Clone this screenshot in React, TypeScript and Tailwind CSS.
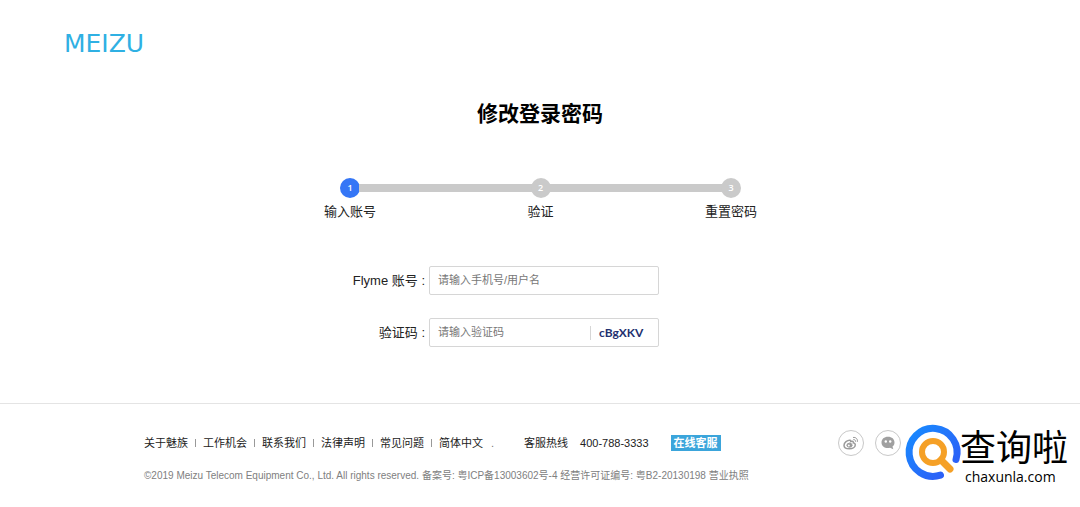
import { clsx } from "clsx";
import { Fragment, useState } from "react";

const steps = ["输入账号", "验证", "重置密码"];

const footerLinks = [
	"关于魅族",
	"工作机会",
	"联系我们",
	"法律声明",
	"常见问题",
	"简体中文",
];

const StepBar = ({ current }: { current: number }) => (
	<div className="flex flex-col items-center pl-px">
		<div className="flex w-[401px] items-center">
			{steps.map((step, index) => (
				<Fragment key={step}>
					{index > 0 && <div className="-mx-px h-2 flex-1 bg-[#cacaca]" />}
					<span
						className={clsx(
							"flex size-5 items-center justify-center rounded-full font-['Open_Sans',sans-serif] text-[9px] font-semibold text-white",
							index === current ? "bg-[#3576f6]" : "bg-[#cacaca]"
						)}
					>
						{index + 1}
					</span>
				</Fragment>
			))}
		</div>
		<ol className="mt-1 flex w-[433px] justify-between text-[13px] leading-5">
			{steps.map((step) => (
				<li key={step} className="w-[52px] text-center">
					{step}
				</li>
			))}
		</ol>
	</div>
);

const WeiboIcon = () => (
	<svg viewBox="0 0 16 16" className="size-4" fill="none" stroke="#9a9a9a">
		<path
			d="M7 5.2C4.300 5 1 7.600 1 10.200c0 2.200 2.300 3.600 5.300 3.600 3.400 0 6-1.800 6-4 0-1.200-.9-1.800-2-2 .5-1.300-.6-2-2.600-1.200.2-.9 0-1.300-.7-1.400z"
			strokeWidth="1.500"
		/>
		<ellipse cx="6.500" cy="10.200" rx="2.600" ry="2" fill="#9a9a9a" />
		<circle cx="5.800" cy="10.500" r="1" fill="#fff" stroke="none" />
		<path d="M10.300 4.600c1.400-.3 2.500.8 2.200 2.100M10 2.500c2.900-.6 5 1.700 4.300 4.400" />
	</svg>
);

const ChatIcon = () => (
	<svg viewBox="0 0 16 16" className="size-4">
		<path
			d="M8 1.800c3.900 0 6.500 2.400 6.500 5.600 0 1.800-.7 3.200-2 4.200l.8 2.600-3.300-1.400c-.6.2-1.300.2-2 .2-3.900 0-6.500-2.400-6.500-5.600s2.600-5.600 6.500-5.600z"
			fill="#a0a0a0"
		/>
		<circle cx="5.800" cy="6.500" r="1.200" fill="#fff" />
		<circle cx="10.200" cy="6.500" r="1.200" fill="#fff" />
	</svg>
);

const SearchBadge = () => (
	<div className="absolute right-3 bottom-5 flex items-start">
		<svg
			viewBox="0 0 54 56"
			className="h-14 w-[54px] overflow-visible"
			fill="none"
		>
			<defs>
				<linearGradient id="ring" x1="0" y1="0" x2="1" y2="1">
					<stop offset="0" stopColor="#188cff" />
					<stop offset="1" stopColor="#3058f5" />
				</linearGradient>
			</defs>
			<circle cx="27" cy="28" r="27" fill="#fff" />
			<path
				d="M34.500 51.200A24 24 0 1 1 50 35.500"
				stroke="url(#ring)"
				strokeWidth="7"
				strokeLinecap="round"
			/>
			<circle cx="27" cy="28" r="11" stroke="#f5a026" strokeWidth="6" />
			<path
				d="M35 36l9 9"
				stroke="#f5a026"
				strokeWidth="7"
				strokeLinecap="round"
			/>
		</svg>
		<div className="flex flex-col pt-1 text-black">
			<span className="text-[36px] leading-[42px]">查询啦</span>
			<span className="pl-[5px] font-['Open_Sans',sans-serif] text-[14px] leading-[14px] font-medium">
				chaxunla.com
			</span>
		</div>
	</div>
);

const App = () => {
	const [account, setAccount] = useState("");
	const [code, setCode] = useState("");

	return (
		<div className="relative bg-white pb-[20px] font-['Liberation_Sans','Noto_Sans_CJK_SC',sans-serif] text-[#222]">
			<header className="px-16 pt-[29px]">
				<a
					href="#"
					className="block w-fit font-['DejaVu_Sans',sans-serif] text-[25px] leading-[29px] text-[#2fb0e3]"
				>
					MEIZU
				</a>
			</header>

			<main className="pt-[41px]">
				<h1 className="text-center text-[21px] leading-[30px] font-bold text-black">
					修改登录密码
				</h1>

				<div className="mt-[49px]">
					<StepBar current={0} />
				</div>

				<form className="mx-auto mt-11 flex w-[436px] flex-col gap-[23px]">
					<div className="flex items-center">
						<label
							htmlFor="account"
							className="w-[107px] pr-1 text-right text-[13px]"
						>
							Flyme 账号 :
						</label>
						<input
							id="account"
							type="text"
							value={account}
							onChange={(e) => setAccount(e.target.value)}
							placeholder="请输入手机号/用户名"
							className="h-[29px] w-[230px] rounded-xs border border-[#d6d6d6] px-2 pb-0.5 text-[11px] outline-none placeholder:text-[#777]"
						/>
					</div>
					<div className="flex items-center">
						<label
							htmlFor="code"
							className="w-[107px] pr-1 text-right text-[13px]"
						>
							验证码 :
						</label>
						<div className="flex h-[29px] w-[230px] items-center rounded-xs border border-[#d6d6d6]">
							<input
								id="code"
								type="text"
								value={code}
								onChange={(e) => setCode(e.target.value)}
								placeholder="请输入验证码"
								className="w-40 px-2 text-[11px] outline-none placeholder:text-[#777]"
							/>
							<button
								type="button"
								className="h-[14px] border-l border-[#d6d6d6] pl-2 font-['Lato',sans-serif] text-[12px] leading-[14px] font-bold text-[#23306f]"
							>
								cBgXKV
							</button>
						</div>
					</div>
				</form>
			</main>

			<footer className="mt-14 border-t border-[#e4e4e4] pt-[26px]">
				<div className="mx-auto flex w-full max-w-[792px] items-start justify-between">
					<div>
						<div className="flex h-[26px] items-center text-[11px]">
							{footerLinks.map((link, index) => (
								<Fragment key={link}>
									{index > 0 && (
										<span className="mx-[7px] h-2 w-px bg-[#999]" />
									)}
									<a href="#">{link}</a>
								</Fragment>
							))}
							<span className="ml-2 text-[#777]">.</span>
							<span className="ml-[30px]">客服热线</span>
							<span className="ml-3">400-788-3333</span>
							<a
								href="#"
								className="ml-[22px] bg-[#3ba5db] px-[3px] leading-4 font-bold text-white"
							>
								在线客服
							</a>
						</div>
						<p className="mt-3 text-[10px] leading-4 text-[#808080]">
							©2019 Meizu Telecom Equipment Co., Ltd. All rights reserved.{" "}
							备案号: 粤ICP备13003602号-4 经营许可证编号: 粤B2-20130198 营业执照
						</p>
					</div>
					<div className="mr-[35px] flex gap-[11px]">
						<a
							href="#"
							aria-label="Weibo"
							className="flex size-[26px] items-center justify-center rounded-full border border-[#c8c8c8]"
						>
							<WeiboIcon />
						</a>
						<a
							href="#"
							aria-label="WeChat"
							className="flex size-[26px] items-center justify-center rounded-full border border-[#c8c8c8]"
						>
							<ChatIcon />
						</a>
					</div>
				</div>
			</footer>

			<SearchBadge />
		</div>
	);
};

export default App;
